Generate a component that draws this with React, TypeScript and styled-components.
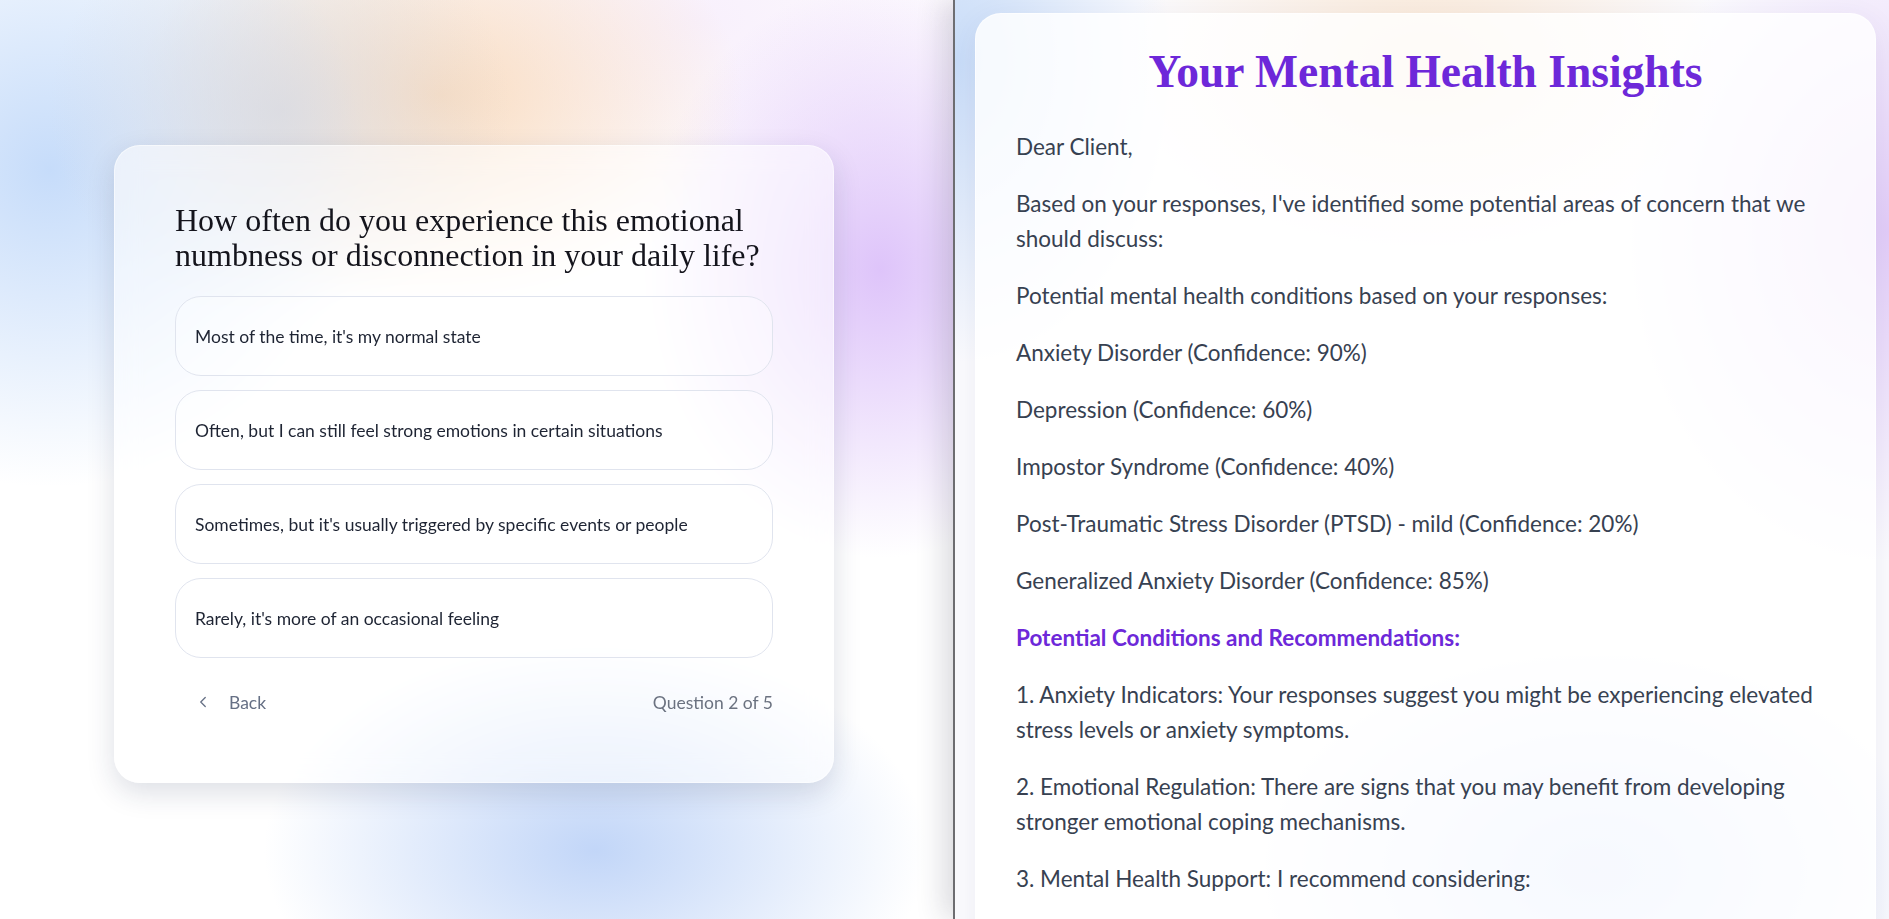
import React from "react";
import styled, { createGlobalStyle } from "styled-components";
import { ChevronLeft } from "lucide-react";

const GlobalStyle = createGlobalStyle`
  html, body {
    margin: 0;
    padding: 0;
    height: 100%;
    overflow: hidden;
  }
  body {
    font-family: "Lato", "Noto Sans", sans-serif;
    -webkit-font-smoothing: antialiased;
  }
  * { box-sizing: border-box; }
`;

const Split = styled.div`
  display: flex;
  width: 100vw;
  height: 100vh;
  overflow: hidden;
`;

const QuizPane = styled.section`
  width: 953px;
  flex-shrink: 0;
  display: flex;
  align-items: flex-start;
  padding: 145px 0 0 114px;
  background:
    radial-gradient(ellipse 330px 300px at 280px 110px, rgba(214, 216, 224, 0.75), rgba(214, 216, 224, 0) 70%),
    radial-gradient(ellipse 440px 440px at 50px 170px, rgba(198, 220, 250, 1), rgba(198, 220, 250, 0) 72%),
    radial-gradient(ellipse 420px 290px at 440px 95px, rgba(249, 219, 190, 0.95), rgba(249, 219, 190, 0) 72%),
    radial-gradient(ellipse 330px 400px at 880px 270px, rgba(222, 196, 250, 1), rgba(222, 196, 250, 0) 72%),
    radial-gradient(ellipse 460px 290px at 595px 850px, rgba(194, 214, 248, 1), rgba(194, 214, 248, 0) 72%),
    radial-gradient(ellipse 500px 300px at 700px 20px, rgba(248, 240, 252, 1), rgba(248, 240, 252, 0) 72%),
    #ffffff;
`;

const QuizCard = styled.div`
  width: 720px;
  padding: 57px 60px 60px;
  border-radius: 26px;
  border: 1px solid rgba(255, 255, 255, 0.5);
  background: rgba(255, 255, 255, 0.55);
  box-shadow: 0 10px 28px rgba(30, 40, 80, 0.15);
  backdrop-filter: blur(12px);
`;

const Question = styled.h2`
  margin: 0 0 23px;
  font-family: "Liberation Serif", "Times New Roman", serif;
  font-weight: 400;
  font-size: 32px;
  line-height: 35px;
  color: #14141c;
`;

const OptionList = styled.div`
  display: flex;
  flex-direction: column;
  gap: 14px;
`;

const Option = styled.button`
  display: flex;
  align-items: center;
  height: 80px;
  padding: 0 19px;
  border: 1px solid #e0e4ee;
  border-radius: 26px;
  background: rgba(255, 255, 255, 0.3);
  font-family: "Lato", "Noto Sans", sans-serif;
  font-size: 17.5px;
  color: #1e2433;
  text-align: left;
  cursor: pointer;
`;

const Footer = styled.div`
  display: flex;
  align-items: center;
  justify-content: space-between;
  height: 40px;
  margin-top: 24px;
`;

const BackButton = styled.button`
  display: flex;
  align-items: center;
  gap: 17px;
  padding: 0 19px;
  height: 40px;
  border: none;
  background: transparent;
  font-family: "Lato", "Noto Sans", sans-serif;
  font-size: 17.5px;
  color: #667085;
  cursor: pointer;
`;

const Progress = styled.span`
  font-size: 17.5px;
  color: #6b7280;
`;

const ResultPane = styled.section`
  position: relative;
  z-index: 1;
  flex: 1;
  min-width: 0;
  padding: 13px 13px 0 20px;
  border-left: 2px solid #6e6e72;
  box-shadow: -10px 0 26px rgba(40, 40, 60, 0.16);
  background:
    radial-gradient(ellipse 300px 420px at 0px 60px, rgba(200, 220, 248, 1), rgba(200, 220, 248, 0) 72%),
    radial-gradient(ellipse 420px 260px at 470px 60px, rgba(249, 225, 200, 0.8), rgba(249, 225, 200, 0) 72%),
    radial-gradient(ellipse 360px 460px at 934px 230px, rgba(226, 204, 248, 1), rgba(226, 204, 248, 0) 72%),
    radial-gradient(ellipse 460px 300px at 640px 870px, rgba(206, 220, 250, 1), rgba(206, 220, 250, 0) 72%),
    #fbfbfe;
`;

const InsightsCard = styled.article`
  padding: 33px 40px 40px;
  border-radius: 26px;
  border: 1px solid rgba(255, 255, 255, 0.6);
  background: rgba(255, 255, 255, 0.82);
  box-shadow: 0 8px 30px rgba(60, 60, 120, 0.08);
  min-height: 1100px;
`;

const Title = styled.h1`
  margin: 0 0 32px;
  text-align: center;
  font-family: "Liberation Serif", "Times New Roman", serif;
  font-weight: 700;
  font-size: 45.5px;
  line-height: 50px;
  color: #6d28d9;
`;

const Paragraph = styled.p`
  margin: 0 0 22px;
  font-size: 22.5px;
  line-height: 35px;
  color: #374151;
`;

const SectionHeading = styled.h3`
  margin: 0 0 22px;
  font-size: 22.5px;
  line-height: 35px;
  font-weight: 700;
  color: #6d28d9;
`;

const options = [
  "Most of the time, it's my normal state",
  "Often, but I can still feel strong emotions in certain situations",
  "Sometimes, but it's usually triggered by specific events or people",
  "Rarely, it's more of an occasional feeling",
];

const conditions = [
  "Anxiety Disorder (Confidence: 90%)",
  "Depression (Confidence: 60%)",
  "Impostor Syndrome (Confidence: 40%)",
  "Post-Traumatic Stress Disorder (PTSD) - mild (Confidence: 20%)",
  "Generalized Anxiety Disorder (Confidence: 85%)",
];

const recommendations = [
  "1. Anxiety Indicators: Your responses suggest you might be experiencing elevated stress levels or anxiety symptoms.",
  "2. Emotional Regulation: There are signs that you may benefit from developing stronger emotional coping mechanisms.",
  "3. Mental Health Support: I recommend considering:",
];

export default function App() {
  return (
    <>
      <GlobalStyle />
      <Split>
        <QuizPane>
          <QuizCard>
            <Question>
              How often do you experience this emotional numbness or disconnection in your daily life?
            </Question>
            <OptionList>
              {options.map((o) => (
                <Option key={o}>{o}</Option>
              ))}
            </OptionList>
            <Footer>
              <BackButton>
                <ChevronLeft size={18} strokeWidth={1.75} />
                <span>Back</span>
              </BackButton>
              <Progress>Question 2 of 5</Progress>
            </Footer>
          </QuizCard>
        </QuizPane>
        <ResultPane>
          <InsightsCard>
            <Title>Your Mental Health Insights</Title>
            <Paragraph>Dear Client,</Paragraph>
            <Paragraph>
              Based on your responses, I've identified some potential areas of concern that we should discuss:
            </Paragraph>
            <Paragraph>Potential mental health conditions based on your responses:</Paragraph>
            {conditions.map((c) => (
              <Paragraph key={c}>{c}</Paragraph>
            ))}
            <SectionHeading>Potential Conditions and Recommendations:</SectionHeading>
            {recommendations.map((r) => (
              <Paragraph key={r}>{r}</Paragraph>
            ))}
          </InsightsCard>
        </ResultPane>
      </Split>
    </>
  );
}
